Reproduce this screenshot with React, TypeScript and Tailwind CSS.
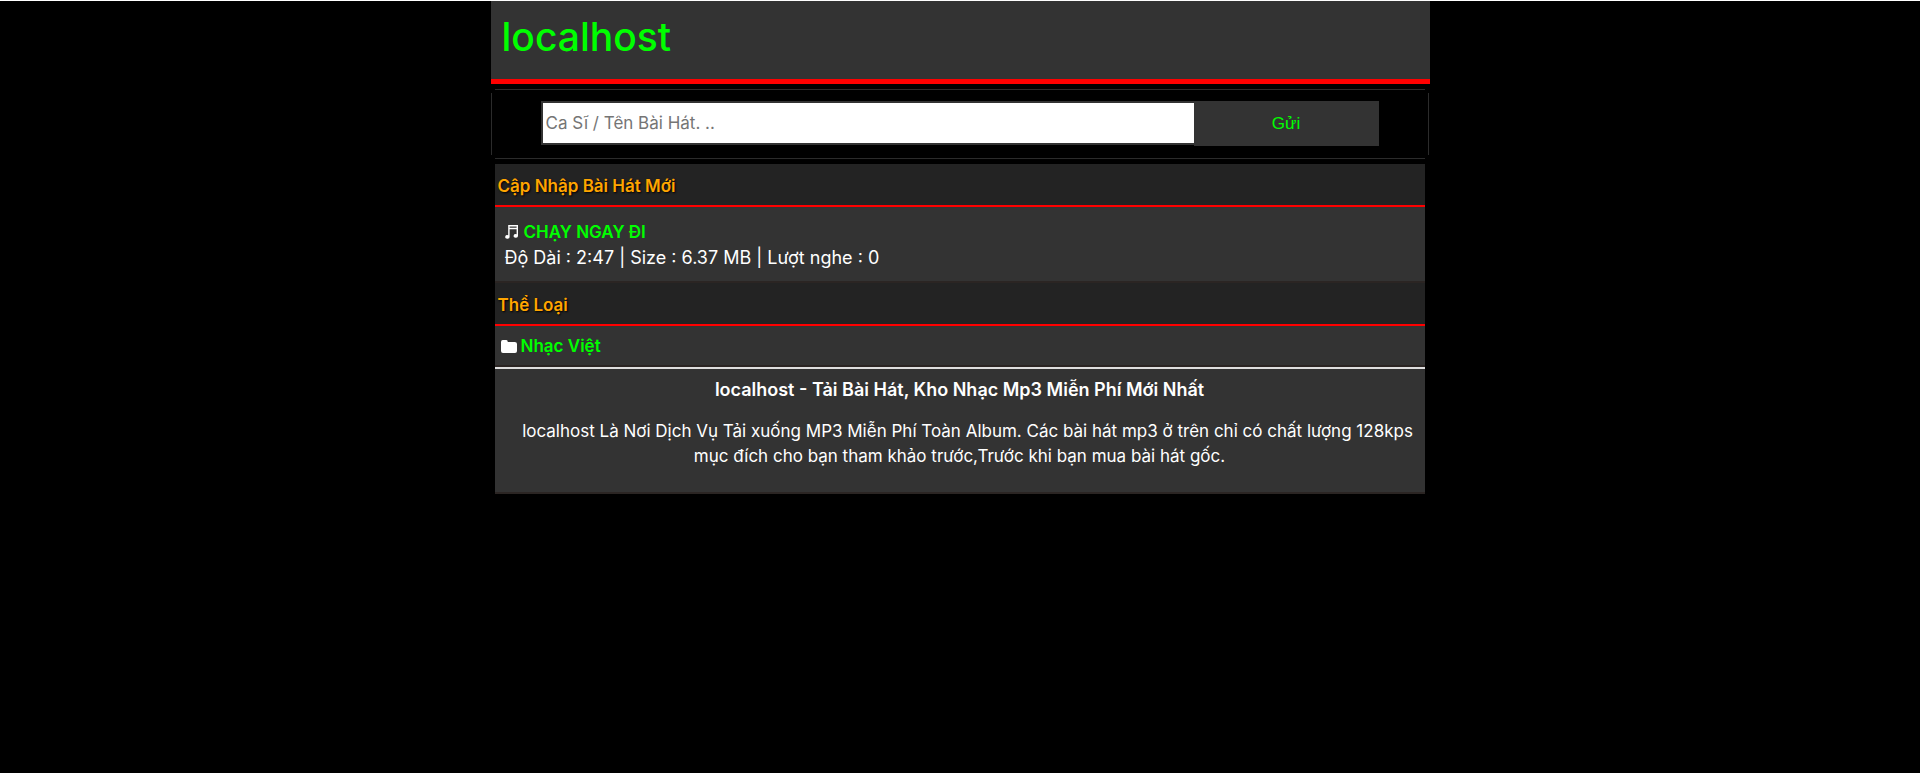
import type { ReactNode } from "react";

function SectionTitle({ children }: { children: ReactNode }) {
  return (
    <h2 className="border-b-2 border-[#ff0000] bg-[#232323] px-[3px] pt-[9px] pb-1.5 text-[17px] leading-[26px] font-semibold text-[#ffa500] [text-shadow:1px_1px_2px_#000]">
      {children}
    </h2>
  );
}

function MusicIcon() {
  return (
    <svg viewBox="0 0 13 14" className="h-3.5 w-[13px] shrink-0" fill="white" aria-hidden="true">
      <path d="M3.2 0H13V11a2.2 1.8 0 1 1-1.4-1.7V4.3H4.6V12a2.2 1.8 0 1 1-1.4-1.7ZM4.6 1.4v1.3h7V1.4Z" />
    </svg>
  );
}

function FolderIcon() {
  return (
    <svg viewBox="0 0 16 13" className="h-[13px] w-4 shrink-0" fill="white" aria-hidden="true">
      <path d="M1.8 0H5.2Q6.8 0 6.8 2H13.8Q16 2 16 4V11Q16 13 14 13H2Q0 13 0 11V2Q0 0 1.8 0Z" />
    </svg>
  );
}

export default function App() {
  return (
    <div className="min-h-screen border-t border-white bg-black font-['Inter','Noto_Sans',sans-serif] text-white">
      <div className="mx-auto w-full max-w-[939px]">
        <header className="border-b-5 border-[#ff0000] bg-[#333] px-[11px] pt-2.5 pb-4">
          <h1 className="text-[39px] leading-[52px] font-medium text-[#00ff00]">
            <a href="#">localhost</a>
          </h1>
        </header>

        <form
          className="mt-[5px] mr-px flex items-start bg-[linear-gradient(#2b2b2b,#2b2b2b),linear-gradient(#2b2b2b,#2b2b2b),linear-gradient(#2b2b2b,#2b2b2b),linear-gradient(#2b2b2b,#2b2b2b)] bg-[position:top,bottom,left,right] bg-[size:calc(100%-8px)_1px,calc(100%-8px)_1px,1px_calc(100%-8px),1px_calc(100%-8px)] bg-no-repeat px-[50px] pt-3 pb-[13px]"
          onSubmit={(e) => e.preventDefault()}
        >
          <input
            type="text"
            aria-label="Ca Sĩ / Tên Bài Hát"
            placeholder="Ca Sĩ / Tên Bài Hát. .."
            className="h-11 min-w-0 flex-1 border-2 border-r-0 border-[#333] bg-white px-[3px] text-[17px] text-black outline-none placeholder:text-[#757575]"
          />
          <button type="submit" className="h-[45px] w-[185px] bg-[#333] font-['Liberation_Sans',sans-serif] text-[17px] text-[#00ff00]">
            Gửi
          </button>
        </form>

        <main className="mt-[5px] mr-[5px] ml-1">
          <section>
            <SectionTitle>Cập Nhập Bài Hát Mới</SectionTitle>
            <div className="border-b-2 border-[#2b2523] bg-[#333] px-2.5 pt-3 pb-2.5">
              <div className="flex items-center gap-1.5">
                <MusicIcon />
                <a href="#" className="text-[17px] leading-[26px] font-semibold text-[#00ff00]">
                  CHẠY NGAY ĐI
                </a>
              </div>
              <p className="text-lg leading-[26px]">Độ Dài : 2:47 | Size : 6.37 MB | Lượt nghe : 0</p>
            </div>
          </section>

          <section>
            <SectionTitle>Thể Loại</SectionTitle>
            <div className="flex items-center gap-1 border-b-2 border-[#2b2523] bg-[#333] px-1.5 pt-[7px] pb-1.5">
              <FolderIcon />
              <a href="#" className="text-[17px] leading-[26px] font-semibold text-[#00ff00]">
                Nhạc Việt
              </a>
            </div>
          </section>

          <footer className="border-t-2 border-b-2 border-t-[#dedede] border-b-[#2b2523] bg-[#333] px-2 pt-2 pb-[23px] text-center">
            <h2 className="text-lg leading-[26px] font-semibold">
              localhost - Tải Bài Hát, Kho Nhạc Mp3 Miễn Phí Mới Nhất
            </h2>
            <p className="mt-4 indent-4 text-[17px] leading-[25px]">
              localhost Là Nơi Dịch Vụ Tải xuống MP3 Miễn Phí Toàn Album. Các bài hát mp3 ở trên chỉ có chất lượng 128kps mục đích
              cho bạn tham khảo trước,Trước khi bạn mua bài hát gốc.
            </p>
          </footer>
        </main>
      </div>
    </div>
  );
}
